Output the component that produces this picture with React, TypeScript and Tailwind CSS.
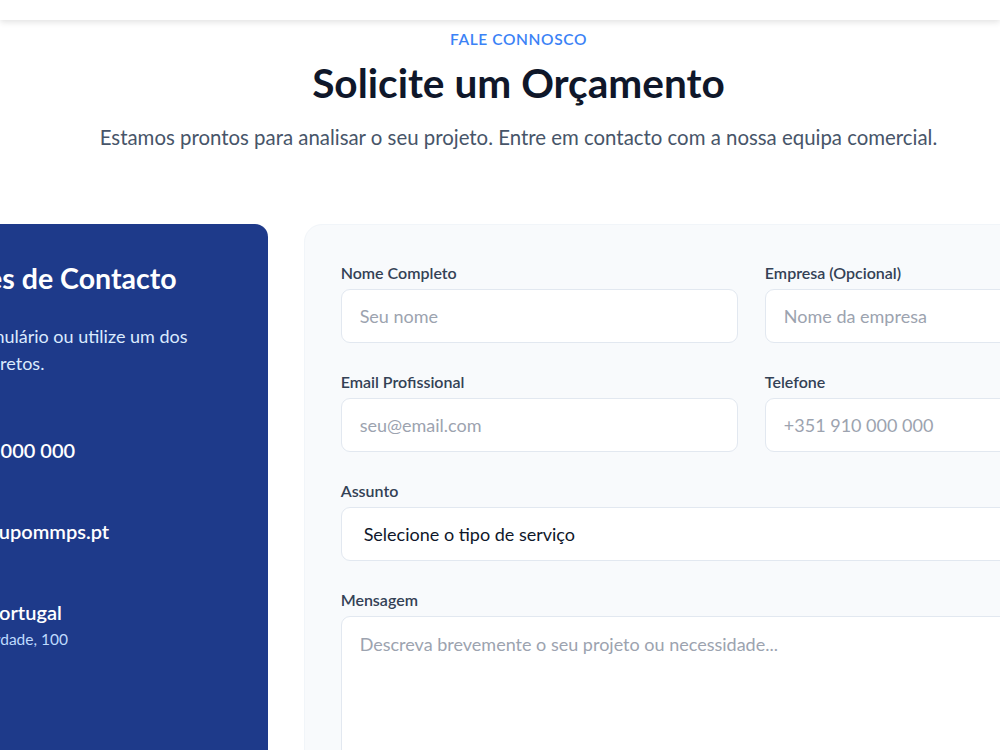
import { Phone, Mail, MapPin } from 'lucide-react';

const inputCls =
    'h-[54px] w-full rounded-[9px] border border-[#e2e8f0] bg-white px-[18px] text-[18px] text-[#0f172a] placeholder:text-[#9ca3af] outline-none';

const labelCls = 'mb-[4px] text-[16px] font-semibold leading-[24px] text-[#334155]';

function Field({ label, placeholder }: { label: string; placeholder: string }) {
    return (
        <div className="flex flex-col">
            <label className={labelCls}>{label}</label>
            <input className={inputCls} placeholder={placeholder} />
        </div>
    );
}

function ContactItem({
    icon,
    label,
    value,
    sub,
}: {
    icon: React.ReactNode;
    label: string;
    value: string;
    sub?: string;
}) {
    return (
        <div className="flex items-start gap-[11px]">
            <div className="flex h-[36px] w-[36px] shrink-0 items-center justify-center rounded-[9px] bg-white/10 text-[#93c5fd]">
                {icon}
            </div>
            <div>
                <div className="text-[15.5px] leading-[24px] text-[#bfdbfe]">{label}</div>
                <div className="text-[20px] font-semibold leading-[30px] text-white">{value}</div>
                {sub && <div className="text-[15.5px] leading-[24px] text-[#bfdbfe]">{sub}</div>}
            </div>
        </div>
    );
}

export default function App() {
    return (
        <div className="min-h-screen overflow-hidden bg-white [font-family:Lato,'Noto_Sans',sans-serif]">
            <header className="relative z-10 h-[20px] bg-white shadow-[0_2px_6px_rgba(0,0,0,0.12)]" />

            <section className="ml-[-162px] w-[1361px]">
                <div className="pt-[7px] text-center">
                    <div className="text-[15.5px] font-semibold uppercase leading-[24px] tracking-[0.04em] text-[#3b82f6]">
                        Fale Connosco
                    </div>
                    <h1 className="mt-[8px] text-[40.6px] font-bold leading-[48px] text-[#0f172a]">
                        Solicite um Orçamento
                    </h1>
                    <p className="mt-[15px] text-[20.4px] leading-[30px] text-[#475569]">
                        Estamos prontos para analisar o seu projeto. Entre em contacto com a nossa equipa comercial.
                    </p>
                </div>

                <div className="mt-[72px] grid grid-cols-3 gap-[36px]">
                    <aside className="h-[600px] rounded-[13px] bg-[#1e3a8a] p-[36px] text-white">
                        <h2 className="-ml-[16px] whitespace-nowrap text-[28.5px] font-bold leading-[36px]">
                            Informações de Contacto
                        </h2>
                        <p className="mt-[27px] text-[18px] leading-[27px] text-[#dbeafe]">
                            Preencha o formulário ou utilize um dos nossos canais diretos.
                        </p>
                        <div className="mt-[34px] flex flex-col gap-[27px]">
                            <ContactItem icon={<Phone size={18} />} label="Telefone" value="+351 21 000 000" />
                            <ContactItem icon={<Mail size={18} />} label="Email" value="geral@grupommps.pt" />
                            <ContactItem
                                icon={<MapPin size={18} />}
                                label="Morada"
                                value="Lisboa, Portugal"
                                sub="Av. da Liberdade, 100"
                            />
                        </div>
                    </aside>

                    <form className="col-span-2 rounded-[18px] border border-[#f1f5f9] bg-[#f8fafc] p-[36px]">
                        <div className="grid grid-cols-2 gap-x-[27px] gap-y-[27px]">
                            <Field label="Nome Completo" placeholder="Seu nome" />
                            <Field label="Empresa (Opcional)" placeholder="Nome da empresa" />
                            <Field label="Email Profissional" placeholder="seu@email.com" />
                            <Field label="Telefone" placeholder="+351 910 000 000" />
                        </div>
                        <div className="mt-[27px] flex flex-col">
                            <label className={labelCls}>Assunto</label>
                            <select className="h-[54px] w-full rounded-[9px] border border-[#e2e8f0] bg-white px-[18px] text-[18px] text-[#0f172a] outline-none">
                                <option>Selecione o tipo de serviço</option>
                            </select>
                        </div>
                        <div className="mt-[27px] flex flex-col">
                            <label className={labelCls}>Mensagem</label>
                            <textarea
                                rows={5}
                                className="w-full resize-none rounded-[9px] border border-[#e2e8f0] bg-white px-[18px] py-[14px] text-[18px] text-[#0f172a] placeholder:text-[#9ca3af] outline-none"
                                placeholder="Descreva brevemente o seu projeto ou necessidade..."
                            />
                        </div>
                    </form>
                </div>
            </section>
        </div>
    );
}
